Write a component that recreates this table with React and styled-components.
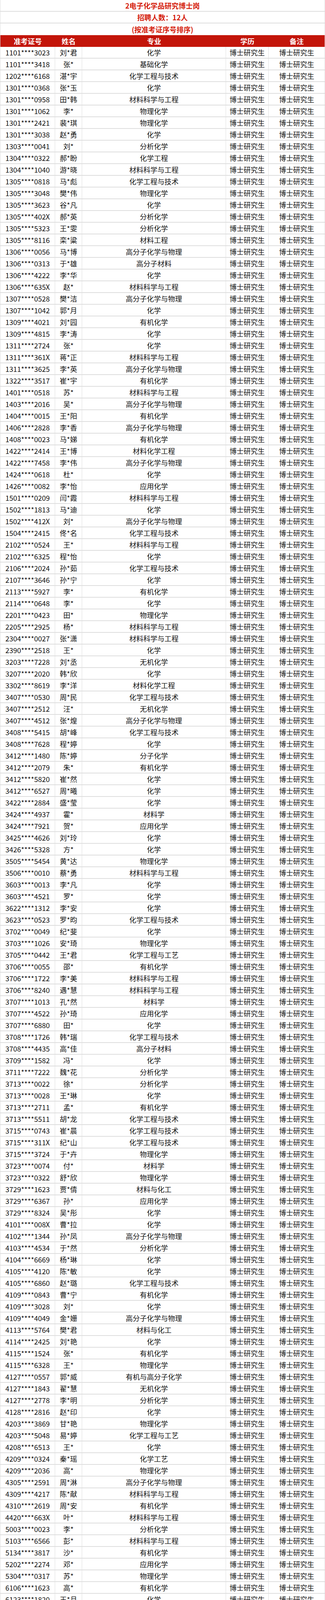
import React from "react";
import styled, { createGlobalStyle } from "styled-components";

const GlobalStyle = createGlobalStyle`
  html, body {
    margin: 0;
    padding: 0;
    background: #fff;
    font-family: "Noto Sans CJK SC", "Noto Sans", sans-serif;
  }
`;

const COLS = "140px 69px 368px 109px 1fr";

const Page = styled.div`
  width: 831px;
  border-left: 1px solid #dcdcdc;
  border-right: 1px solid #dcdcdc;
  box-sizing: border-box;
`;

const TitleRow = styled.div`
  height: ${(p) => p.$h}px;
  box-sizing: border-box;
  border-bottom: ${(p) => (p.$last ? "none" : "2px solid #dedede")};
  display: flex;
  align-items: center;
  justify-content: center;
  color: #d41c0b;
  font-size: 18px;
  line-height: 1;
  font-weight: 700;
  overflow: hidden;
`;

const HeadRow = styled.div`
  display: grid;
  grid-template-columns: ${COLS};
  height: ${(p) => p.$h}px;
  background: #c3150a;
  color: #fff;
  font-size: 18px;
  line-height: 1;
  font-weight: 700;
  overflow: hidden;
`;

const HeadCell = styled.div`
  display: flex;
  align-items: center;
  justify-content: center;
`;

const Row = styled.div`
  display: grid;
  grid-template-columns: ${COLS};
  height: 30px;
  box-sizing: border-box;
  border-bottom: 2px solid #dedede;
  color: #111;
  font-size: 18px;
  line-height: 1;
  overflow: hidden;
`;

const Cell = styled.div`
  display: flex;
  align-items: center;
  justify-content: center;
  white-space: nowrap;
  border-right: ${(p) => (p.$end ? "none" : "1px solid #dedede")};
`;

const doctors = `1101****3023|刘*君|化学
1101****3418|张*|基础化学
1202****6168|湛*宇|化学工程与技术
1301****0368|张*玉|化学
1301****0958|田*韩|材料科学与工程
1301****1062|李*|物理化学
1301****2421|裴*琪|物理化学
1301****3038|赵*勇|化学
1303****0041|刘*|分析化学
1304****0322|郝*盼|化学工程
1304****1040|游*晓|材料科学与工程
1305****0818|马*彪|化学工程与技术
1305****3048|樊*伟|物理化学
1305****3623|谷*凡|化学
1305****402X|郝*英|分析化学
1305****5323|王*雯|分析化学
1305****8116|栾*粱|材料工程
1306****0056|马*博|高分子化学与物理
1306****0313|于*雄|高分子材料
1306****4222|李*华|化学
1306****635X|赵*|材料科学与工程
1307****0528|樊*洁|高分子化学与物理
1307****1042|郭*月|化学
1309****4021|刘*园|有机化学
1309****4815|李*涛|化学
1311****2724|张*|化学
1311****361X|蒋*正|材料科学与工程
1311****3625|李*英|高分子化学与物理
1322****3517|崔*宇|有机化学
1401****0518|苏*|材料科学与工程
1403****2016|吴*|高分子化学与物理
1404****0015|王*阳|有机化学
1406****2828|李*香|高分子化学与物理
1408****0023|马*娣|有机化学
1422****2414|王*博|材料化学工程
1422****7458|李*伟|高分子化学与物理
1424****0618|杜*|化学
1426****0082|李*怡|应用化学
1501****0209|闫*霞|材料科学与工程
1502****1813|马*迪|化学
1502****412X|刘*|高分子化学与物理
1504****2415|佟*名|化学工程与技术
2102****0524|王*|材料科学与工程
2102****6325|程*怡|化学
2106****2024|孙*茹|化学工程与技术
2107****3646|孙*宁|化学
2113****5927|李*|有机化学
2114****0648|李*|化学
2201****0423|田*|物理化学
2205****2925|杨*|材料科学与工程
2304****0027|张*潇|材料科学与工程
2390****2518|王*|化学
3203****7228|刘*丞|无机化学
3207****2020|韩*欣|化学
3302****8619|李*洋|材料化学工程
3407****0530|周*民|化学工程与技术
3407****2512|汪*|无机化学
3407****4512|张*煌|高分子化学与物理
3408****5415|胡*峰|化学工程与技术
3408****7628|程*婷|化学
3412****1480|陈*婷|分子化学
3412****2079|朱*|有机化学
3412****5820|崔*然|化学
3412****6527|周*曦|化学
3422****2884|盛*莹|化学
3424****4937|霍*|材料学
3424****7921|贺*|应用化学
3425****4626|刘*玲|化学
3426****5328|方*|化学
3505****5454|黄*达|物理化学
3506****0010|蔡*勇|材料科学与工程
3603****0013|李*凡|化学
3603****4521|罗*|化学
3622****1312|李*安|化学
3623****0523|罗*昀|化学工程与技术
3702****0049|纪*斐|化学
3703****1026|安*琦|物理化学
3705****0442|王*君|化学工程与工艺
3706****0055|邵*|有机化学
3706****1722|李*美|材料科学与工程
3706****8240|遇*慧|材料科学与工程
3707****1013|孔*然|材料学
3707****4522|孙*琦|应用化学
3707****6880|田*|化学
3708****1726|韩*瑞|化学工程与技术
3708****4435|高*佳|高分子材料
3709****1582|冯*|化学
3711****7222|魏*花|分析化学
3713****0022|徐*|分析化学
3713****0028|王*琳|化学
3713****2711|孟*|有机化学
3713****5511|胡*龙|化学工程与技术
3715****0743|崔*晨|化学工程与技术
3715****311X|纪*山|化学工程与技术
3715****3724|于*卉|物理化学
3723****0074|付*|材料学
3723****0322|舒*欣|物理化学
3729****1623|贾*倩|材料与化工
3729****6367|孙*|应用化学
3729****8324|吴*彤|化学
4101****008X|曹*拉|化学
4102****1344|孙*凤|高分子化学与物理
4103****4534|于*然|分析化学
4104****6669|杨*琳|化学
4105****4120|陈*敏|化学
4105****6860|赵*璐|化学工程与技术
4109****0843|曹*宁|有机化学
4109****3028|刘*|化学
4109****4049|金*姗|高分子化学与物理
4113****5764|樊*君|材料与化工
4114****2425|刘*艳|化学
4115****1524|张*|有机化学
4115****6328|王*|物理化学
4127****0557|郭*威|有机与高分子化学
4127****1843|翟*慧|无机化学
4127****2778|李*明|分析化学
4128****2816|赵*印|化学
4203****3869|甘*艳|物理化学
4203****5048|易*婷|化学工程与工艺
4208****6513|王*|化学
4209****0324|秦*瑶|化学工艺
4209****2036|高*|物理化学
4305****2591|周*淋|高分子化学与物理
4309****4217|陈*献|材料科学与工程
4310****2619|周*安|有机化学
4420****663X|叶*|材料科学与工程
5003****0023|李*|分析化学
5103****6566|彭*|材料科学与工程
5134****3817|沙*|有机化学
5202****2274|邓*|应用化学
5304****0317|苏*|物理化学
6106****1623|高*|有机化学
6123****1820|王*月|化学
6127****0920|闫*林|化学工程与技术
6528****6114|邓*建|纳米材料与技术
6529****6720|胡*娟|材料科学与工程`
  .split("\n")
  .map((l) => [...l.split("|"), "博士研究生", "博士研究生"]);

const masters = `1101****0016|申*阳|材料科学与工程|
1101****1820|辛*元|化学工程|
1101****3715|刘*程|化学|
1102****1355|刘*|材料与化工|
1102****2125|王*郡|材料与化工|
1102****498X|王*怡|物理化学|
1102****6427|康*怡|材料科学与工程|
1310****0339|王*|工业催化|
3705****3664|李*祺|化学工程与工艺|
1101****0062|宋*爽|材料科学与工程|名校尖子生`
  .split("\n")
  .map((l) => {
    const [id, name, major, note] = l.split("|");
    return [id, name, major, "硕士研究生", note];
  });

const HEADS = ["准考证号", "姓名", "专业", "学历", "备注"];

const Section = ({ titles, titleH, headH, rows }) => (
  <>
    {titles.map((t, i) => (
      <TitleRow key={t} $h={titleH} $last={i === titles.length - 1}>
        {t}
      </TitleRow>
    ))}
    <HeadRow $h={headH}>
      {HEADS.map((h) => (
        <HeadCell key={h}>{h}</HeadCell>
      ))}
    </HeadRow>
    {rows.map((r, i) => (
      <Row key={i}>
        {r.map((c, j) => (
          <Cell key={j} $end={j === 4}>
            {c}
          </Cell>
        ))}
      </Row>
    ))}
  </>
);

const App = () => (
  <>
    <GlobalStyle />
    <Page>
      <Section
        titles={["2电子化学品研究博士岗", "招聘人数：12人", "(按准考证序号排序)"]}
        titleH={30}
        headH={30}
        rows={doctors}
      />
      <Section
        titles={["3材料与化工研究硕士岗（燕山分院）", "招聘人数：3人", "(按准考证序号排序)"]}
        titleH={40}
        headH={31}
        rows={masters}
      />
    </Page>
  </>
);

export default App;
